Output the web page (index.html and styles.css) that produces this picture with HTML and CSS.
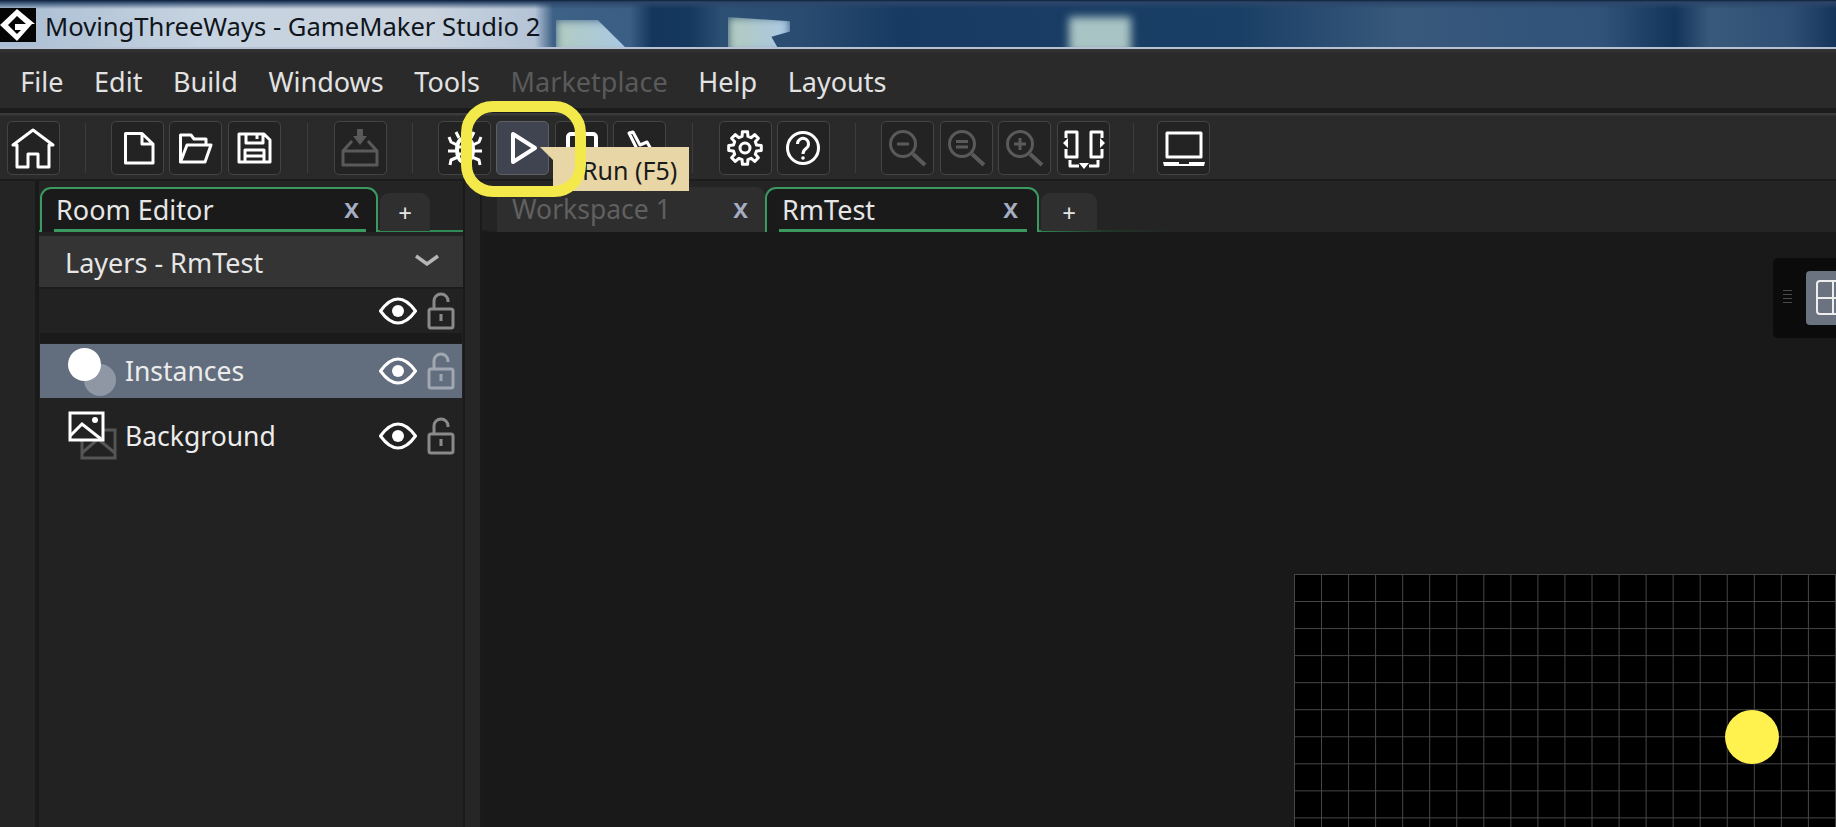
FILE: index.html
```html
<!DOCTYPE html>
<html lang="en">
<head>
    <meta charset="UTF-8">
    <meta name="viewport" content="width=device-width, initial-scale=1.0">
    <title>MovingThreeWays - GameMaker Studio 2</title>
    <link rel="stylesheet" href="styles.css">
</head>
<body>
    <div class="app">
        <div class="titlebar">
            <span class="patch patch-a"></span>
            <span class="patch patch-b"></span>
            <span class="patch patch-c"></span>
            <svg class="logo" viewBox="0 0 36 34">
                <rect width="36" height="34" fill="#050505"/>
                <path d="M17 1 35 16 26 16 17 8 8 17 17 26 21 22 15 22 15 16 32 16 17 33 0 17Z" fill="#fff"/>
            </svg>
            <span class="title-text">MovingThreeWays - GameMaker Studio 2</span>
        </div>

        <div class="menubar">
            <span class="menu-item">File</span>
            <span class="menu-item">Edit</span>
            <span class="menu-item">Build</span>
            <span class="menu-item">Windows</span>
            <span class="menu-item">Tools</span>
            <span class="menu-item off">Marketplace</span>
            <span class="menu-item">Help</span>
            <span class="menu-item">Layouts</span>
        </div>
        <div class="bar-gap"></div>

        <div class="toolbar">
            <div class="tool-group">
                <div class="tool">
                    <svg viewBox="0 0 53 54"><path d="M26 9 46 24H42V46H31V33H21V46H10V24H6Z"/></svg>
                </div>
            </div>
            <div class="sep"></div>
            <div class="tool-group">
                <div class="tool">
                    <svg viewBox="0 0 53 54"><path d="M14.5 12.5H31L42 23V42H14.5Z M31 12.5V23H42"/></svg>
                </div>
                <div class="tool">
                    <svg viewBox="0 0 53 54"><path d="M11.5 41V14H22L25 18H37V24 M11.5 41H36L42 24H18Z"/></svg>
                </div>
                <div class="tool">
                    <svg viewBox="0 0 53 54"><path d="M11 13H36L42 19V41H11Z M18 13V22H35V13 M29 13V18 M17 41V29H36V41 M17 35H36"/></svg>
                </div>
            </div>
            <div class="sep sep-wide"></div>
            <div class="tool-group">
                <div class="tool off">
                    <svg viewBox="0 0 53 54"><path d="M9 30H43V44H9Z M9 30 18 20 M43 30 34 20"/><path class="solid" d="M23 8H29V15H33L26 24 19 15H23Z"/></svg>
                </div>
            </div>
            <div class="sep"></div>
            <div class="tool-group">
                <div class="tool">
                    <svg viewBox="0 0 53 54"><path class="thick" d="M27 17C20 18 19 23 19 29 19 36 22 41 27 41 32 41 35 36 35 29 35 23 34 18 27 17Z"/><path d="M19 26H35 M19 33H35 M21 17 18 11 M33 17 36 11 M19 24 13 21 11 16 M35 24 41 21 43 16 M18 30H10 M36 30H44 M20 36 13 39 12 44 M34 36 41 39 42 44"/></svg>
                </div>
                <div class="tool active">
                    <svg viewBox="0 0 53 54"><path class="thick" d="M17 13V41L39 27Z"/></svg>
                </div>
                <div class="tool">
                    <svg viewBox="0 0 53 54"><rect class="thick" x="13" y="13" width="28" height="28" rx="3"/></svg>
                </div>
                <div class="tool">
                    <svg viewBox="0 0 53 54"><path d="M16 12 20 11 27 24 34 21 39 30 29 37H19L24 28Z"/></svg>
                </div>
            </div>
            <div class="sep sep-wide"></div>
            <div class="tool-group">
                <div class="tool">
                    <svg viewBox="0 0 53 54">
                        <g transform="translate(26 27)">
                            <path d="M11.6-2.9 16.3-2.6V2.6L11.6 2.9 10.3 6.2 13.4 9.7 9.7 13.4 6.2 10.3 2.9 11.6 2.6 16.3H-2.6L-2.9 11.6-6.2 10.3-9.7 13.4-13.4 9.7-10.3 6.2-11.6 2.9-16.3 2.6V-2.6L-11.6-2.9-10.3-6.2-13.4-9.7-9.7-13.4-6.2-10.3-2.9-11.6-2.6-16.3H2.6L2.9-11.6 6.2-10.3 9.7-13.4 13.4-9.7 10.3-6.2Z"/>
                            <circle r="5"/>
                        </g>
                    </svg>
                </div>
                <div class="tool">
                    <svg viewBox="0 0 53 54"><circle cx="26" cy="27" r="15.5"/><path d="M20.5 23A5.5 5.5 0 1 1 29 27.5C27 29 26 30 26 33"/><circle class="solid" cx="26" cy="37" r="1.8"/></svg>
                </div>
            </div>
            <div class="sep"></div>
            <div class="tool-group">
                <div class="tool off">
                    <svg viewBox="0 0 53 54"><circle cx="22" cy="23" r="12.5"/><path d="M16 23H28"/><path class="thick" d="M32 33 44 44"/></svg>
                </div>
                <div class="tool off">
                    <svg viewBox="0 0 53 54"><circle cx="22" cy="23" r="12.5"/><path d="M16 20.5H28 M16 26H28"/><path class="thick" d="M32 33 44 44"/></svg>
                </div>
                <div class="tool off">
                    <svg viewBox="0 0 53 54"><circle cx="22" cy="23" r="12.5"/><path d="M16 23H28 M22 17V29"/><path class="thick" d="M32 33 44 44"/></svg>
                </div>
                <div class="tool">
                    <svg viewBox="0 0 53 54"><path d="M9 17V11H20V36H9V28 M45 17V11H34V36H45V28 M13 39V45H22 M41 39V45H32"/><path class="solid" d="M11 17V27L6 22Z M43 17V27L48 22Z M22 42H32L27 48Z"/></svg>
                </div>
            </div>
            <div class="sep sep-narrow"></div>
            <div class="tool-group">
                <div class="tool">
                    <svg viewBox="0 0 53 54"><rect x="10" y="12" width="34" height="24"/><path class="solid" d="M6 41H22V43H32V41H48L47 45H7Z"/></svg>
                </div>
            </div>
        </div>

        <div class="main">
            <div class="side-strip"></div>

            <div class="panel">
                <div class="tabrow">
                    <div class="tab current room-tab">
                        <span>Room Editor</span>
                        <span class="tab-close">X</span>
                    </div>
                    <div class="tab-add">+</div>
                </div>
                <div class="layers-head">
                    <span>Layers - RmTest</span>
                    <svg class="chevron" viewBox="0 0 24 12"><path d="M1 2 12 10 23 2"/></svg>
                </div>
                <div class="layers-tools">
                    <svg class="eye" viewBox="0 0 38 28"><path d="M1.5 14C8 5 14 2 19 2S30 5 36.5 14C30 23 24 26 19 26S8 23 1.5 14Z"/><circle cx="19" cy="14" r="6"/></svg>
                    <svg class="lock" viewBox="0 0 28 38"><rect x="2" y="17" width="24" height="19" rx="2"/><path d="M7 17V9A7 7 0 0 1 21 9V10"/><path class="key" d="M14 22V29"/></svg>
                </div>
                <div class="layers-list">
                    <div class="layer selected">
                        <div class="layer-icon">
                            <span class="dot-back"></span>
                            <span class="dot-front"></span>
                        </div>
                        <span class="layer-name">Instances</span>
                        <svg class="eye" viewBox="0 0 38 28"><path d="M1.5 14C8 5 14 2 19 2S30 5 36.5 14C30 23 24 26 19 26S8 23 1.5 14Z"/><circle cx="19" cy="14" r="6"/></svg>
                        <svg class="lock" viewBox="0 0 28 38"><rect x="2" y="17" width="24" height="19" rx="2"/><path d="M7 17V9A7 7 0 0 1 21 9V10"/><path class="key" d="M14 22V29"/></svg>
                    </div>
                    <div class="layer">
                        <div class="layer-icon">
                            <svg class="pic" viewBox="0 0 50 50">
                                <g class="pic-back"><rect x="14" y="19" width="33" height="28"/><path d="M14 42 30 28 47 42"/></g>
                                <g class="pic-front"><rect x="2" y="2" width="33" height="27"/><path d="M2 25 14 13 33 28"/><circle class="solid" cx="27" cy="9" r="3"/></g>
                            </svg>
                        </div>
                        <span class="layer-name">Background</span>
                        <svg class="eye" viewBox="0 0 38 28"><path d="M1.5 14C8 5 14 2 19 2S30 5 36.5 14C30 23 24 26 19 26S8 23 1.5 14Z"/><circle cx="19" cy="14" r="6"/></svg>
                        <svg class="lock" viewBox="0 0 28 38"><rect x="2" y="17" width="24" height="19" rx="2"/><path d="M7 17V9A7 7 0 0 1 21 9V10"/><path class="key" d="M14 22V29"/></svg>
                    </div>
                </div>
            </div>

            <div class="gutter"></div>

            <div class="workspace">
                <div class="tabrow work-tabs">
                    <div class="tab faded">
                        <span>Workspace 1</span>
                        <span class="tab-close">X</span>
                    </div>
                    <div class="tab current rm-tab">
                        <span>RmTest</span>
                        <span class="tab-close">X</span>
                    </div>
                    <div class="tab-add">+</div>
                </div>
                <div class="canvas">
                    <div class="room">
                        <div class="ball"></div>
                    </div>
                    <div class="float-tools">
                        <div class="grip"></div>
                        <div class="float-btn"><div class="grid-icon"></div></div>
                    </div>
                </div>
            </div>
        </div>

        <div class="tooltip">Run (F5)</div>
        <div class="run-ring"></div>
    </div>
</body>
</html>
```

FILE: styles.css
```css
*{
    box-sizing: border-box;
}
body{
    margin: 0;
    background-color: #191919;
    font-family: "Noto Sans", "Open Sans", sans-serif;
    color: #e6e6e6;
}
.app{
    position: relative;
    display: flex;
    flex-direction: column;
    height: 100vh;
    overflow: hidden;
}

/* title bar, the desktop shows through it */
.titlebar{
    position: relative;
    display: flex;
    align-items: flex-start;
    height: 49px;
    flex: none;
    padding-top: 8px;
    overflow: hidden;
    border-bottom: 2px solid #b4c2d3;
    background:
        linear-gradient(180deg, #0f2038 0, #2c4669 2px, rgba(44, 70, 105, 0) 9px),
        linear-gradient(90deg, #a9bdd3 0, #c6d3e0 200px, #c9d3de 430px, #b4c4d6 535px, #3e6186 553px, #3a5e84 630px, #14365c 652px, #15385e 690px, #2c5074 722px, #2a4c70 800px, #173a63 900px, #1a3f66 1240px, #38597b 1400px, #31527a 1600px, #14355a 1675px, #38597a 1710px, #2f5074 1790px, #15345a 1836px);
}
.patch{
    position: absolute;
    filter: blur(4px);
}
.patch-a{
    left: 556px;
    top: 20px;
    width: 76px;
    height: 34px;
    background: linear-gradient(90deg, #b2cbbf, #a9c8e8);
    clip-path: polygon(0 0, 55% 0, 100% 100%, 0 100%);
}
.patch-b{
    left: 728px;
    top: 17px;
    width: 62px;
    height: 36px;
    background: linear-gradient(90deg, #b3cbbd, #aac8e6);
    clip-path: polygon(0 0, 100% 12%, 100% 40%, 70% 55%, 85% 100%, 0 100%);
}
.patch-c{
    left: 1069px;
    top: 17px;
    width: 62px;
    height: 36px;
    background: #a9c4c4;
}
.logo{
    position: relative;
    width: 36px;
    height: 34px;
    flex: none;
}
.title-text{
    position: relative;
    margin-left: 9px;
    font-size: 25.6px;
    line-height: 38px;
    color: #10151c;
}

.menubar{
    display: flex;
    align-items: center;
    flex: none;
    height: 59px;
    padding: 6px 0 0 5px;
    background: linear-gradient(#343434 0, #2a2a2a 5px);
    font-size: 27px;
}
.menu-item{
    padding: 0 15.3px;
    color: #e2e2e2;
}
.menu-item.off{
    color: #5a5a5a;
}
.bar-gap{
    flex: none;
    height: 5px;
    background: #1c1c1c;
}

.toolbar{
    display: flex;
    align-items: center;
    flex: none;
    height: 68px;
    padding: 3px 0 0 7px;
    border-bottom: 2px solid #1c1c1c;
    background: linear-gradient(#3a3a3a 0, #3a3a3a 2px, #2a2a2a 3px);
}
.tool-group{
    display: flex;
    gap: 5.4px;
}
.tool{
    width: 53px;
    height: 54px;
    border: 1px solid #444;
    border-radius: 5px;
    background: #232323;
}
.tool svg{
    display: block;
    width: 53px;
    height: 54px;
    margin: -1px;
    fill: none;
    stroke: #fff;
    stroke-width: 3;
    stroke-linejoin: round;
}
.tool.active{
    background: #3f4450;
    border-color: #5d5f63;
}
.tool.off svg{
    stroke: #5a5a5a;
}
.tool .thick{
    stroke-width: 4;
}
.tool .solid{
    fill: #fff;
    stroke: none;
}
.tool.off .solid{
    fill: #5a5a5a;
}
.sep{
    width: 1px;
    height: 50px;
    margin: 0 25px;
    background: #3c3c3c;
}
.sep-wide{
    margin: 0 26px;
}
.sep-narrow{
    margin: 0 23px;
}

.main{
    display: flex;
    flex: 1;
    min-height: 0;
}
.side-strip{
    width: 37px;
    flex: none;
    background: #242424;
    border-right: 2px solid #1a1a1a;
}
.panel{
    display: flex;
    flex-direction: column;
    flex: none;
    width: 426px;
    margin-left: 2px;
    background: #222;
    border-right: 2px solid #1a1a1a;
}
.gutter{
    width: 17px;
    flex: none;
    background: #262626;
    border-right: 2px solid #1a1a1a;
}

.tabrow{
    display: flex;
    align-items: flex-end;
    flex: none;
    height: 51px;
    background:
        linear-gradient(90deg, #2f8a55, #2f8a55) 0 100% / 100% 2px no-repeat,
        #242424;
}
.tab{
    display: flex;
    align-items: center;
    height: 45px;
    font-size: 27px;
}
.tab.current{
    position: relative;
    z-index: 1;
    background: #1a1a1a;
    border: 2px solid #3a9a60;
    border-bottom: none;
    border-radius: 11px 11px 0 0;
}
.tab.current::after{
    content: "";
    position: absolute;
    left: 12px;
    right: 10px;
    bottom: 0;
    height: 3px;
    background: #3a9a60;
}
.room-tab{
    width: 338px;
    margin-left: 1px;
    padding: 0 17px 3px 14px;
}
.rm-tab{
    width: 274px;
    padding: 0 19px 3px 15px;
}
.tab-close{
    margin-left: auto;
    font-size: 22px;
    font-weight: 700;
    color: #a4adc2;
}
.tab-add{
    display: flex;
    align-items: center;
    justify-content: center;
    width: 50px;
    height: 38px;
    margin-left: 2px;
    margin-bottom: 1px;
    border-radius: 9px 9px 0 0;
    background: #2f2f2f;
    font-size: 24px;
}
.work-tabs{
    padding-left: 15px;
    background:
        linear-gradient(90deg, #1c1c1c 0, #2f8a55 15%, #2f8a55 41%, #20372a 46%, #242424 51%) 0 100% / 100% 2px no-repeat,
        #242424;
}
.work-tabs .tab-add{
    width: 56px;
}
.tab.faded{
    width: 268px;
    padding: 0 17px 1px 15px;
    border-radius: 9px 9px 0 0;
    background: #2e2e2e;
    color: #606060;
    font-size: 26.5px;
}
.tab.faded .tab-close{
    color: #a4adc2;
}

.layers-head{
    display: flex;
    align-items: center;
    justify-content: space-between;
    flex: none;
    height: 53px;
    margin-top: 4px;
    padding: 2px 24px 0 26px;
    border-bottom: 2px solid #1c1c1c;
    background: #343434;
    font-size: 27px;
}
.chevron{
    width: 24px;
    height: 12px;
    margin-bottom: 6px;
    fill: none;
    stroke: #b5b5b5;
    stroke-width: 3.5;
}
.layers-tools{
    display: flex;
    align-items: center;
    justify-content: flex-end;
    flex: none;
    height: 44px;
    padding-right: 8px;
}
.eye{
    width: 38px;
    height: 28px;
    flex: none;
    fill: none;
    stroke: #fff;
    stroke-width: 3;
}
.eye circle{
    fill: #fff;
    stroke: none;
}
.lock{
    width: 28px;
    height: 38px;
    margin-left: 10px;
    flex: none;
    fill: none;
    stroke: #8a8a8a;
    stroke-width: 3;
}
.layers-list{
    flex: 1;
    margin: 0 1px;
    padding-top: 10px;
    border-top: 1px solid #1a1a1a;
    background: linear-gradient(#1a1a1a 0, #1a1a1a 9px, #222 10px);
}
.layer{
    display: flex;
    align-items: center;
    height: 54px;
    margin-bottom: 11px;
    padding-right: 7px;
    font-size: 26.5px;
}
.layer.selected{
    background: #626e7d;
}
.layer.selected .lock{
    stroke: #a0a7b1;
}
.layer-name{
    flex: 1;
    color: #ececec;
}
.layer-icon{
    position: relative;
    width: 85px;
    height: 54px;
    flex: none;
}
.dot-front, .dot-back{
    position: absolute;
    border-radius: 50%;
}
.dot-front{
    left: 28px;
    top: 4px;
    width: 33px;
    height: 33px;
    background: #fff;
}
.dot-back{
    left: 44px;
    top: 20px;
    width: 32px;
    height: 32px;
    background: #8f97a5;
}
.pic{
    position: absolute;
    left: 28px;
    top: 2px;
    width: 50px;
    height: 50px;
    fill: none;
}
.pic-back{
    stroke: #555;
    stroke-width: 3;
}
.pic-front{
    stroke: #fff;
    stroke-width: 3;
}
.pic-front rect{
    fill: #222;
}
.pic-front .solid{
    fill: #fff;
    stroke: none;
}

.workspace{
    display: flex;
    flex-direction: column;
    flex: 1;
    min-width: 0;
}
.canvas{
    position: relative;
    flex: 1;
    overflow: hidden;
    background: #191919;
}
.room{
    position: absolute;
    left: 812px;
    top: 342px;
    width: 700px;
    height: 400px;
    background-color: #000;
    background-image:
        linear-gradient(#484848 1px, transparent 1px),
        linear-gradient(90deg, #484848 1px, transparent 1px);
    background-size: 27.05px 27.05px;
}
.ball{
    position: absolute;
    left: 431px;
    top: 136px;
    width: 54px;
    height: 54px;
    border-radius: 50%;
    background: #fff24f;
}
.float-tools{
    position: absolute;
    left: 1291px;
    top: 26px;
    display: flex;
    align-items: center;
    width: 70px;
    height: 80px;
    padding-left: 10px;
    border-radius: 5px 0 0 5px;
    background: #0b0b0b;
}
.grip{
    flex: none;
    width: 9px;
    height: 16px;
    background: repeating-linear-gradient(#4a4a4a 0, #4a4a4a 1.5px, transparent 1.5px, transparent 4px);
}
.float-btn{
    flex: none;
    width: 60px;
    height: 54px;
    margin-left: 14px;
    padding: 9px 0 0 10px;
    border-radius: 4px 0 0 4px;
    background: #6b7280;
}
.grid-icon{
    width: 50px;
    height: 35px;
    border: 2px solid #eee;
    border-radius: 4px;
    background:
        linear-gradient(#eee, #eee) 0 50% / 100% 2px no-repeat,
        linear-gradient(#eee, #eee) 14px 0 / 2px 100% no-repeat;
}

/* callout over the toolbar */
.tooltip{
    position: absolute;
    left: 553px;
    top: 147px;
    width: 136px;
    height: 44px;
    padding-left: 29px;
    background: #e8d6a6;
    color: #1a1a1a;
    font-size: 25px;
    line-height: 46px;
}
.tooltip::before{
    content: "";
    position: absolute;
    left: -13px;
    top: 0;
    border-top: 13px solid #e8d6a6;
    border-left: 13px solid transparent;
}
.run-ring{
    position: absolute;
    left: 461px;
    top: 101px;
    width: 125px;
    height: 96px;
    border: 11px solid #f4e94a;
    border-radius: 32px;
}
```
